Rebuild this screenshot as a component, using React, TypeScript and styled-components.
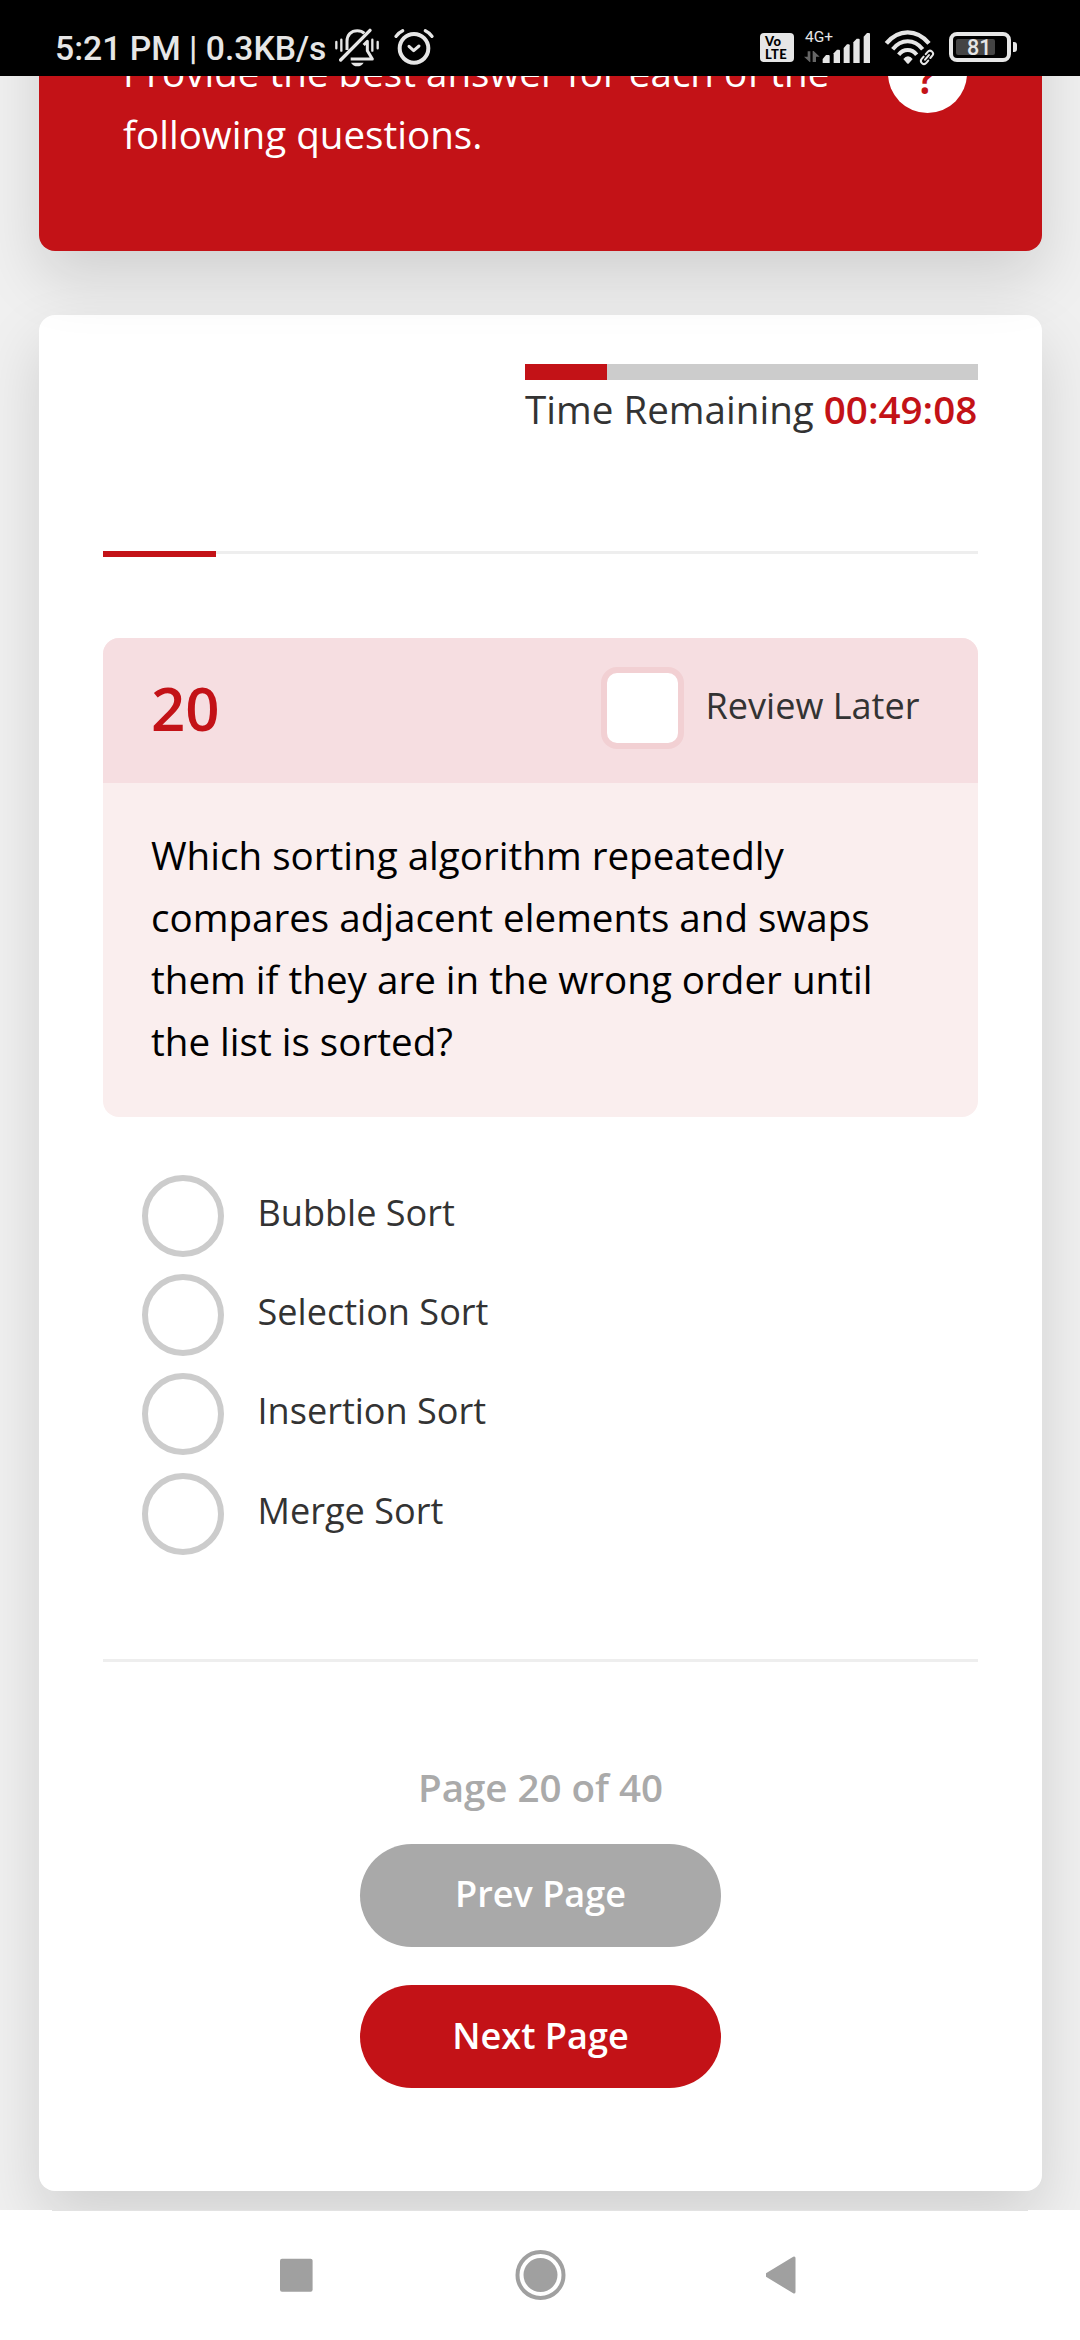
import React from 'react';
import styled, { createGlobalStyle } from 'styled-components';

const RED = '#c31217';
const LIGHT = '#e6e6e6';

const GlobalStyle = createGlobalStyle`
  * { box-sizing: border-box; }
  html, body { margin: 0; padding: 0; }
  body { font-family: 'Open Sans', 'Noto Sans', sans-serif; color: #333; background: #f0f0f0; }
  p, h1, h2, ul { margin: 0; padding: 0; font-weight: 400; list-style: none; }
  svg { display: block; }
`;

const Screen = styled.div`
  width: 1080px;
  height: 2340px;
  display: flex;
  flex-direction: column;
  overflow: hidden;
`;

/* ---------- status bar ---------- */

const StatusBar = styled.header`
  flex: none;
  height: 76px;
  display: flex;
  align-items: flex-start;
  padding: 28px 63px 0 55px;
  background: #000;
  color: ${LIGHT};
  font-family: Roboto, sans-serif;
  position: relative;
  z-index: 2;
`;

const Clock = styled.span`
  width: 279px;
  font-size: 33.7px;
  line-height: 42px;
  font-weight: 500;
  white-space: nowrap;
`;

const StatusIcons = styled.div<{ $gap: number }>`
  display: flex;
  align-items: flex-start;
  gap: ${(p) => p.$gap}px;
`;

const SystemIcons = styled(StatusIcons)`
  margin-left: auto;
`;

const Volte = styled.div`
  width: 34px;
  height: 29px;
  margin: 5px 10px 0 0;
  padding: 2px 0 0 5px;
  border-radius: 4px;
  background: ${LIGHT};
  color: #000;
  font: 900 13px/12.5px Lato, sans-serif;
  letter-spacing: 0.4px;
`;

const Cell = styled.div`
  width: 67px;
  height: 36px;
  margin-right: 13px;
  display: grid;
`;

const CellLabel = styled.span`
  grid-area: 1 / 1;
  padding-left: 1px;
  font-size: 15.5px;
  line-height: 18px;
`;

const CellBars = styled.svg`
  grid-area: 1 / 1;
`;

const Battery = styled.div`
  display: flex;
  align-items: center;
  gap: 2px;
  margin: 4px 0 0 14px;
`;

const BatteryBody = styled.div`
  width: 62px;
  height: 30px;
  padding: 3px;
  border: 4px solid ${LIGHT};
  border-radius: 8px;
`;

const BatteryLevel = styled.div`
  width: 39px;
  height: 16px;
  border-radius: 2px;
  background: #444;
  color: ${LIGHT};
  font-size: 21.5px;
  font-weight: 500;
  line-height: 17px;
  padding-left: 11px;
`;

const BatteryTip = styled.div`
  width: 4px;
  height: 10px;
  border-radius: 0 3px 3px 0;
  background: ${LIGHT};
`;

const BellOff = () => (
  <svg width="46" height="39" viewBox="42 24 138 117" fill="none" stroke={LIGHT}>
    <path d="M81 90V64C81 45 93 32 112 32c9 0 16 3 21 8" strokeWidth="9" />
    <path d="M62 120L150 31" strokeWidth="10" strokeLinecap="round" />
    <path d="M92 117H157L142 92V64L131 75" strokeWidth="9" strokeLinejoin="round" />
    <path d="M49 66v19M64 59v33M157 59v33M173 66v19" strokeWidth="7" strokeLinecap="round" />
    <path d="M93 128H131C127 135 120 139 112 139S97 135 93 128Z" fill={LIGHT} stroke="none" />
  </svg>
);

const Alarm = () => (
  <svg width="42" height="39" viewBox="218 24 126 117" fill="none" stroke={LIGHT} strokeLinecap="round" strokeLinejoin="round">
    <circle cx="281" cy="85" r="43" strokeWidth="12" />
    <path d="M227 49Q234 38 247 32M335 49Q328 38 315 32" strokeWidth="10" />
    <path d="M266 79l14 13 16-14" strokeWidth="9" />
  </svg>
);

const Signal = () => (
  <CellBars width="67" height="36" viewBox="162 24 201 108" fill={LIGHT}>
    <g fill="#666">
      <path d="M173 94h8v32h-2l-17-16h11z" />
      <path d="M188 93h3l18 17h-11v16h-10z" />
    </g>
    <path d="M218 129v-12l10-12h8q3 0 3 3v21z" />
    <path d="M251 129V100l10-11h6q3 0 3 3v37z" />
    <path d="M281 129V84l10-11h5q3 0 3 3v53z" />
    <path d="M310 129V67l10-11h6q3 0 3 3v70z" />
    <path d="M341 129V50l10-11h6q3 0 3 3v87z" />
  </CellBars>
);

const Wifi = () => (
  <svg width="51" height="40" viewBox="39 24 153 120" fill="none" stroke={LIGHT}>
    <path d="M46 70Q74 37 110 37T174 70" strokeWidth="13" />
    <path d="M65 88Q84 64 110 64T155 88" strokeWidth="12" />
    <path d="M83 104Q94 90 110 90T137 104" strokeWidth="12" />
    <path d="M97 117Q103 109 111 109T125 117L114 130Q111 133 108 130Z" fill={LIGHT} stroke="none" />
    <g transform="rotate(-50 168 112)">
      <path d="M142 100h52v24h-52z" fill="#000" stroke="none" />
      <path d="M163 103H154a9 9 0 0 0 0 18H163M173 103H182a9 9 0 0 1 0 18H173M159 112H177" strokeWidth="6" strokeLinecap="round" />
    </g>
  </svg>
);

/* ---------- page ---------- */

const Viewport = styled.main`
  flex: none;
  height: 2134px;
  display: flex;
  flex-direction: column;
  padding: 0 38px 0 39px;
  overflow: hidden;
  background: #f0f0f0;
`;

const Card = styled.section`
  flex: none;
  border-radius: 16px;
  box-shadow: 0 27px 62px rgba(0, 0, 0, 0.135);
`;

const IntroCard = styled(Card)`
  height: 275px;
  margin-top: -100px;
  padding: 65px 75px 0 84px;
  display: flex;
  justify-content: space-between;
  background: ${RED};
  color: #fff;
  position: relative;
  z-index: 1;
`;

const IntroText = styled.p`
  width: 720px;
  font-size: 38.6px;
  line-height: 62px;
`;

const HelpButton = styled.div`
  width: 79px;
  height: 79px;
  margin-top: -7px;
  border-radius: 50%;
  background: #fff;
  color: ${RED};
  font-size: 45px;
  font-weight: 600;
  line-height: 85px;
  text-align: center;
  padding-right: 2px;
`;

const QuizCard = styled(Card)`
  height: 1876px;
  margin-top: 64px;
  padding: 49px 64px 0;
  background: #fff;
  display: flex;
  flex-direction: column;
`;

const TimerBlock = styled.div`
  width: 453px;
  height: 187px;
  align-self: flex-end;
`;

const TimeTrack = styled.div`
  height: 16px;
  background: #ccc;
`;

const TimeFill = styled.div`
  width: 82px;
  height: 16px;
  background: ${RED};
`;

const TimeText = styled.p`
  margin-top: 2px;
  font-size: 38.6px;
  line-height: 54px;
  white-space: nowrap;
  b { font-weight: 600; color: ${RED}; }
`;

const Rule = styled.div`
  flex: none;
  height: 3px;
  background: #eee;
`;

const RuleProgress = styled.div`
  width: 113px;
  height: 6px;
  background: ${RED};
`;

const Question = styled.article`
  margin-top: 84px;
  border-radius: 16px;
  overflow: hidden;
  background: #faeeee;
`;

const QuestionHead = styled.div`
  height: 145px;
  display: flex;
  align-items: flex-start;
  justify-content: space-between;
  padding: 29px 57px 0 48px;
  background: #f6dee1;
`;

const QuestionNumber = styled.h2`
  font-size: 60px;
  line-height: 82px;
  font-weight: 600;
  color: ${RED};
`;

const ReviewLabel = styled.label`
  display: flex;
  gap: 21.5px;
  width: 320px;
  font-size: 36.1px;
  line-height: 76px;
  white-space: nowrap;
`;

const CheckBox = styled.span`
  flex: none;
  width: 83px;
  height: 82px;
  border: 6px solid #f2d0d3;
  border-radius: 16px;
  background: #fff;
`;

const QuestionText = styled.p`
  padding: 41px 90px 45px 48px;
  font-size: 38.6px;
  line-height: 62px;
  color: #000;
`;

const Options = styled.ul`
  margin: 58px 0 87.2px 39px;
`;

const Option = styled.li`
  display: flex;
  align-items: flex-start;
  gap: 33.5px;
  height: 99.2px;
  font-size: 36.1px;
  line-height: 74px;
`;

const Radio = styled.span`
  width: 82px;
  height: 82px;
  border: 6px solid #ccc;
  border-radius: 50%;
`;

const Pager = styled.nav`
  display: flex;
  flex-direction: column;
  align-items: center;
  padding-top: 99px;
`;

const PageCount = styled.p`
  font-size: 38.5px;
  line-height: 52px;
  height: 83px;
  font-weight: 600;
  color: #aaa;
`;

const PageButton = styled.button<{ $bg: string; $lift: number }>`
  width: 361px;
  height: 103px;
  margin-bottom: 38px;
  padding: 0 0 ${(p) => p.$lift}px;
  border: 0;
  border-radius: 52px;
  background: ${(p) => p.$bg};
  color: #fff;
  font-family: inherit;
  font-size: 36.1px;
  font-weight: 600;
`;

/* ---------- navigation bar ---------- */

const NavBar = styled.footer`
  flex: 1;
  background: #fff;
  position: relative;
  z-index: 2;
  display: flex;
  flex-direction: column;
`;

const NavEdge = styled.div`
  height: 1px;
  margin: 0 52px;
  background: #e2e2e2;
`;

const NavIcons = styled.div`
  display: flex;
  align-items: center;
  gap: 200px;
  height: 128px;
  padding-left: 280px;
`;

const OPTIONS = ['Bubble Sort', 'Selection Sort', 'Insertion Sort', 'Merge Sort'];

export default function App() {
  return (
    <Screen>
      <GlobalStyle />
      <StatusBar>
        <Clock>5:21 PM | 0.3KB/s</Clock>
        <StatusIcons $gap={13}>
          <BellOff />
          <Alarm />
        </StatusIcons>
        <SystemIcons $gap={0}>
          <Volte>Vo<br />LTE</Volte>
          <Cell>
            <CellLabel>4G+</CellLabel>
            <Signal />
          </Cell>
          <Wifi />
          <Battery>
            <BatteryBody>
              <BatteryLevel>81</BatteryLevel>
            </BatteryBody>
            <BatteryTip />
          </Battery>
        </SystemIcons>
      </StatusBar>

      <Viewport>
        <IntroCard>
          <IntroText>Provide the best answer for each of the following questions.</IntroText>
          <HelpButton>?</HelpButton>
        </IntroCard>

        <QuizCard>
          <TimerBlock>
            <TimeTrack>
              <TimeFill />
            </TimeTrack>
            <TimeText>Time Remaining <b>00:49:08</b></TimeText>
          </TimerBlock>

          <Rule>
            <RuleProgress />
          </Rule>

          <Question>
            <QuestionHead>
              <QuestionNumber>20</QuestionNumber>
              <ReviewLabel>
                <CheckBox />
                Review Later
              </ReviewLabel>
            </QuestionHead>
            <QuestionText>
              Which sorting algorithm repeatedly compares adjacent elements and swaps them if they are in
              the wrong order until the list is sorted?
            </QuestionText>
          </Question>

          <Options>
            {OPTIONS.map((label) => (
              <Option key={label}>
                <Radio />
                {label}
              </Option>
            ))}
          </Options>

          <Rule />

          <Pager>
            <PageCount>Page 20 of 40</PageCount>
            <PageButton $bg="#a9a9a9" $lift={4}>Prev Page</PageButton>
            <PageButton $bg={RED} $lift={2}>Next Page</PageButton>
          </Pager>
        </QuizCard>
      </Viewport>

      <NavBar>
        <NavEdge />
        <NavIcons>
          <svg width="35" height="34" viewBox="0 0 35 34">
            <rect x="0" y="0.7" width="32.6" height="33" rx="2" fill="#a0a0a0" />
          </svg>
          <svg width="51" height="50" viewBox="0 0 51 50">
            <circle cx="25.5" cy="25" r="23" fill="none" stroke="#a0a0a0" strokeWidth="4" />
            <circle cx="25.5" cy="25" r="17" fill="#a0a0a0" />
          </svg>
          <svg width="34" height="38" viewBox="2 0 34 38">
            <path d="M2 19L30 2V36Z" fill="#a0a0a0" stroke="#a0a0a0" strokeWidth="3" strokeLinejoin="round" />
          </svg>
        </NavIcons>
      </NavBar>
    </Screen>
  );
}
